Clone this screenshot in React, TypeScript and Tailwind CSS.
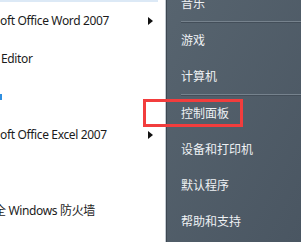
import React from 'react'

const Arrow = () => (
  <svg width="5" height="8" viewBox="0 0 5 8" className="absolute left-[148px] top-1/2 -translate-y-1/2">
    <path d="M0 0 L5 4 L0 8 Z" fill="#111" />
  </svg>
)

const Sep = () => <div className="ml-[14px] h-px bg-[#76828d] shadow-[0_1px_0_#434e59]" />

const RightItem = ({ label }: { label: string }) => (
  <div className="h-[36px] flex items-center pl-[14px] text-[12px] text-[#eef1f4]">{label}</div>
)

export default function App() {
  return (
    <div
      className="relative w-[301px] h-[242px] overflow-hidden flex bg-white"
      style={{ fontFamily: '"Noto Sans", "Noto Sans CJK SC", sans-serif' }}
    >
      {/* Left: program list */}
      <div className="w-[165px] shrink-0 flex flex-col text-[12px] tracking-[-0.35px] text-[#1b1b1b]">
        <div className="w-[158px] h-[2px] bg-[#dce9f6]" />
        <div className="relative h-[38px] flex items-center whitespace-nowrap">
          <span>oft Office Word 2007</span>
          <Arrow />
        </div>
        <div className="h-[38px] flex items-center pl-px">Editor</div>
        <div className="h-[38px] flex items-center">
          <span className="w-[2px] h-[6px] bg-[#2f8fe0]" />
        </div>
        <div className="relative h-[38px] flex items-center whitespace-nowrap">
          <span>oft Office Excel 2007</span>
          <Arrow />
        </div>
        <div className="h-[38px]" />
        <div className="h-[38px] flex items-center whitespace-nowrap -ml-[6px]">
          <span>全 Windows 防火墙</span>
        </div>
      </div>

      {/* Divider */}
      <div className="w-px bg-[#c3cad1]" />
      <div className="w-px bg-[#3d4751]" />

      {/* Right: system links */}
      <div
        className="flex-1 flex flex-col -mt-[15px]"
        style={{ fontFamily: '"Noto Sans CJK SC", sans-serif' }}
      >
        <div className="absolute inset-y-0 left-[167px] right-0 bg-gradient-to-br from-[#57646f] to-[#4a5662]" />
        <div className="relative flex flex-col">
          <RightItem label="音乐" />
          <Sep />
          <RightItem label="游戏" />
          <RightItem label="计算机" />
          <Sep />
          <RightItem label="控制面板" />
          <RightItem label="设备和打印机" />
          <RightItem label="默认程序" />
          <RightItem label="帮助和支持" />
        </div>
      </div>

      {/* Red highlight box */}
      <div className="absolute left-[143px] top-[99px] w-[100px] h-[28px] border-[3px] border-[#f23d3d]" />
    </div>
  )
}
